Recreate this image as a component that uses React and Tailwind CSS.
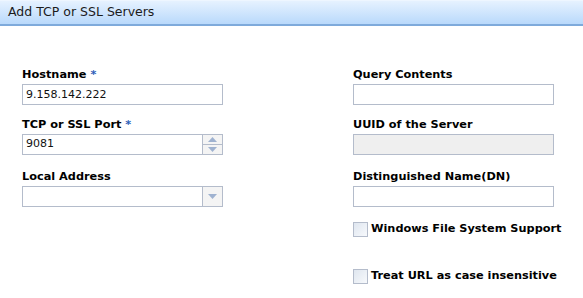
import React from 'react';

const font = { fontFamily: '"DejaVu Sans", Verdana, sans-serif' };

const Label = ({ children, required }) => (
  <div className="h-[14px] text-[11.3px] leading-[14px] font-bold text-[#000]">
    {children}
    {required && <span className="text-[#2e5fb8]"> *</span>}
  </div>
);

const TextField = ({ label, required, value, disabled }) => (
  <div className="flex flex-col">
    <Label required={required}>{label}</Label>
    <input
      type="text"
      defaultValue={value}
      disabled={disabled}
      className={`mt-[2px] h-[21px] w-[201px] border border-[#b4bccb] px-[3px] text-[11px] text-[#111] outline-none ${
        disabled ? 'bg-[#efefef]' : 'bg-white'
      }`}
    />
  </div>
);

const Arrow = ({ up }) => (
  <svg width="9" height="5" viewBox="0 0 9 5">
    <path d={up ? 'M0 5 L4.5 0 L9 5 Z' : 'M0 0 L4.5 5 L9 0 Z'} fill="#9fb2d0" />
  </svg>
);

const SpinField = ({ label, value }) => (
  <div className="flex flex-col">
    <Label required>{label}</Label>
    <div className="mt-[2px] flex h-[21px] w-[201px] border border-[#b4bccb] bg-white">
      <input
        type="text"
        defaultValue={value}
        className="min-w-0 flex-1 px-[3px] text-[11px] text-[#111] outline-none"
      />
      <div className="flex w-[20px] flex-col border-l border-[#b4bccb] bg-[#f4f4f4]">
        <div className="flex flex-1 items-center justify-center border-b border-[#b4bccb]">
          <Arrow up />
        </div>
        <div className="flex flex-1 items-center justify-center">
          <Arrow />
        </div>
      </div>
    </div>
  </div>
);

const SelectField = ({ label }) => (
  <div className="flex flex-col">
    <Label>{label}</Label>
    <div className="mt-[2px] flex h-[21px] w-[201px] border border-[#b4bccb] bg-white">
      <div className="flex-1" />
      <div className="flex w-[20px] items-center justify-center border-l border-[#b4bccb] bg-[#f4f4f4]">
        <Arrow />
      </div>
    </div>
  </div>
);

const Check = ({ label }) => (
  <label className="flex items-center gap-[3px] text-[11.3px] font-bold text-[#000]">
    <span className="h-[15px] w-[15px] border border-[#b4bccb] bg-gradient-to-br from-[#dfe6ef] to-[#f7f9fc]" />
    {label}
  </label>
);

export default function App() {
  return (
    <div className="h-[298px] w-[583px] bg-white" style={font}>
      <div className="flex h-[26px] items-center border-t border-[#eef6ff] border-b-2 border-b-[#7eaadb] bg-gradient-to-b from-[#e6f2ff] to-[#b9d9fb] pl-[8px] text-[12.5px] text-[#1b1b1b]">
        Add TCP or SSL Servers
      </div>
      <div className="grid grid-cols-[331px_1fr] pl-[22px] pt-[42px]">
        <div className="flex flex-col gap-[13px]">
          <TextField label="Hostname" required value="9.158.142.222" />
          <SpinField label="TCP or SSL Port" value="9081" />
          <div className="pt-[2px]">
            <SelectField label="Local Address" />
          </div>
        </div>
        <div className="flex flex-col gap-[13px]">
          <TextField label="Query Contents" />
          <TextField label="UUID of the Server" disabled />
          <div className="pt-[2px]">
            <TextField label="Distinguished Name(DN)" />
          </div>
          <div className="pt-[1px]">
            <Check label="Windows File System Support" />
          </div>
          <div className="pt-[17px]">
            <Check label="Treat URL as case insensitive" />
          </div>
        </div>
      </div>
    </div>
  );
}
